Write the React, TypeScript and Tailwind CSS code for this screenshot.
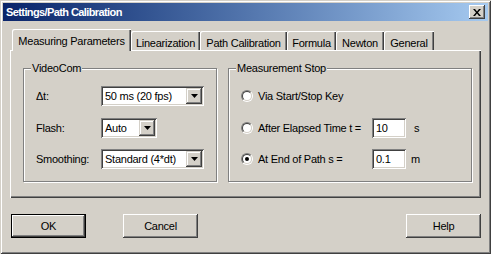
import React from "react";

const raised =
  "shadow-[inset_-1px_-1px_0_#404040,inset_1px_1px_0_#ffffff,inset_-2px_-2px_0_#808080,inset_2px_2px_0_#d4d0c8]";
const sunken =
  "shadow-[inset_1px_1px_0_#808080,inset_-1px_-1px_0_#ffffff,inset_2px_2px_0_#404040,inset_-2px_-2px_0_#d4d0c8]";

function Combo({ w, text }: { w: string; text: string }) {
  return (
    <div className={`${w} h-[20px] bg-white ${sunken} flex items-center p-[2px]`}>
      <div className="flex-1 pl-[2px] leading-none">{text}</div>
      <div
        className={`w-[16px] h-[16px] bg-[#d4d0c8] shadow-[inset_-1px_-1px_0_#404040,inset_1px_1px_0_#d4d0c8,inset_-2px_-2px_0_#808080,inset_2px_2px_0_#ffffff] flex items-center justify-center`}
      >
        <svg width="7" height="4" viewBox="0 0 7 4">
          <path d="M0 0h7L3.5 4z" fill="#000" />
        </svg>
      </div>
    </div>
  );
}

function Radio({ checked }: { checked?: boolean }) {
  return (
    <div className="w-[12px] h-[12px] rounded-full border border-t-[#808080] border-l-[#808080] border-b-white border-r-white flex">
      <div className="w-[10px] h-[10px] rounded-full border border-t-[#404040] border-l-[#404040] border-b-[#d4d0c8] border-r-[#d4d0c8] bg-white flex items-center justify-center">
        {checked && <div className="w-[4px] h-[4px] rounded-full bg-black" />}
      </div>
    </div>
  );
}

function TextBox({ value }: { value: string }) {
  return (
    <div className={`w-[34px] h-[20px] bg-white ${sunken} flex items-center pl-[4px] leading-none`}>
      {value}
    </div>
  );
}

function Group({ title, w, children }: { title: string; w: string; children: React.ReactNode }) {
  return (
    <div
      className={`relative ${w} h-[114px] border border-[#808080] shadow-[inset_1px_1px_0_#ffffff,1px_1px_0_#ffffff]`}
    >
      <div className="absolute left-[7px] top-[-8px] px-[1px] bg-[#d4d0c8] leading-[14px]">{title}</div>
      {children}
    </div>
  );
}

function Button({ label, def }: { label: string; def?: boolean }) {
  return (
    <div className={`w-[75px] h-[24px] ${def ? "border border-black" : ""} flex`}>
      <div className={`flex-1 ${raised} flex items-center justify-center`}>{label}</div>
    </div>
  );
}

const tabs = [
  { label: "Linearization", w: "w-[69px]" },
  { label: "Path Calibration", w: "w-[87px]" },
  { label: "Formula", w: "w-[49px]" },
  { label: "Newton", w: "w-[48px]" },
  { label: "General", w: "w-[50px]" },
];

export default function App() {
  return (
    <div className="w-[491px] h-[254px] bg-[#d4d0c8] p-[3px] shadow-[inset_1px_1px_0_#d4d0c8,inset_-1px_-1px_0_#404040,inset_2px_2px_0_#ffffff,inset_-2px_-2px_0_#808080] font-['Liberation_Sans',Arial,sans-serif] text-[11px] tracking-[-0.25px] text-black overflow-hidden">
      {/* Title bar */}
      <div className="h-[18px] bg-gradient-to-r from-[#0a246a] to-[#a6caf0] flex items-center pl-[3px] pr-[3px]">
        <div className="flex-1 text-white font-bold text-[11px] tracking-[-0.6px] leading-none">Settings/Path Calibration</div>
        <div className={`w-[16px] h-[14px] bg-[#d4d0c8] ${raised} flex items-center justify-center`}>
          <svg width="8" height="7" viewBox="0 0 8 7">
            <path d="M0 0h2l2 2.5L6 0h2L5 3.5 8 7H6L4 4.5 2 7H0l3-3.5z" fill="#000" />
          </svg>
        </div>
      </div>

      {/* Body */}
      <div className="px-[7px] pt-[8px]">
        {/* Tabs */}
        <div className="h-[21px] flex items-end pl-[2px]">
          <div className="relative z-10 w-[119px] h-[22px] mb-[-1px] bg-[#d4d0c8] shadow-[inset_1px_1px_0_#ffffff,inset_-1px_0_0_#404040,inset_-2px_0_0_#808080] rounded-tl-[2px] flex items-start justify-center pt-[4px]">
            Measuring Parameters
          </div>
          {tabs.map((t) => (
            <div
              key={t.label}
              className={`${t.w} h-[19px] shadow-[inset_1px_1px_0_#ffffff,inset_-1px_0_0_#404040,inset_-2px_0_0_#808080] rounded-tl-[2px] flex items-start justify-center pt-[4px]`}
            >
              {t.label}
            </div>
          ))}
        </div>

        {/* Panel */}
        <div className="h-[148px] shadow-[inset_1px_1px_0_#ffffff,inset_-1px_-1px_0_#404040,inset_-2px_-2px_0_#808080] flex pl-[13px] pt-[18px] gap-[11px]">
          <Group title="VideoCom" w="w-[194px]">
            <div className="flex flex-col pl-[12px] pt-[17px]">
              <div className="h-[20px] flex items-center">
                <div className="w-[65px]">Δt:</div>
                <Combo w="w-[103px]" text="50 ms (20 fps)" />
              </div>
              <div className="h-[20px] mt-[12px] flex items-center">
                <div className="w-[65px]">Flash:</div>
                <Combo w="w-[56px]" text="Auto" />
              </div>
              <div className="h-[20px] mt-[11px] flex items-center">
                <div className="w-[65px]">Smoothing:</div>
                <Combo w="w-[103px]" text="Standard (4*dt)" />
              </div>
            </div>
          </Group>
          <Group title="Measurement Stop" w="w-[244px]">
            <div className="flex flex-col pl-[12px] pt-[17px]">
              <div className="h-[20px] flex items-center">
                <Radio />
                <div className="ml-[5px]">Via Start/Stop Key</div>
              </div>
              <div className="h-[20px] mt-[12px] flex items-center">
                <Radio />
                <div className="ml-[5px] w-[114px]">After Elapsed Time t =</div>
                <TextBox value="10" />
                <div className="ml-[8px]">s</div>
              </div>
              <div className="h-[20px] mt-[11px] flex items-center">
                <Radio checked />
                <div className="ml-[5px] w-[114px]">At End of Path s =</div>
                <TextBox value="0.1" />
                <div className="ml-[5px]">m</div>
              </div>
            </div>
          </Group>
        </div>

        {/* Buttons */}
        <div className="mt-[16px] flex pl-[1px]">
          <Button label="OK" def />
          <div className="ml-[37px]">
            <Button label="Cancel" />
          </div>
          <div className="ml-auto">
            <Button label="Help" />
          </div>
        </div>
      </div>
    </div>
  );
}
